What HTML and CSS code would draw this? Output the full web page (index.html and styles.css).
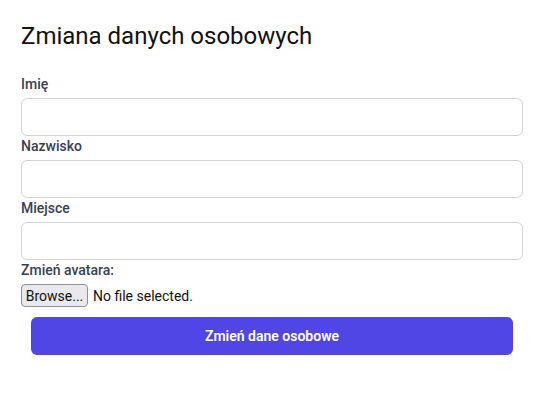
FILE: index.html
```html
<!DOCTYPE html>
<html lang="pl">
<head>
<meta charset="utf-8">
<title>Zmiana danych osobowych</title>
<link rel="stylesheet" href="styles.css">
</head>
<body>
<main class="page">
  <h2 class="title">Zmiana danych osobowych</h2>
  <form class="form">
    <label class="label" for="imie">Imię</label>
    <input class="input" id="imie" type="text">
    <label class="label" for="nazwisko">Nazwisko</label>
    <input class="input" id="nazwisko" type="text">
    <label class="label" for="miejsce">Miejsce</label>
    <input class="input" id="miejsce" type="text">
    <label class="label" for="avatar">Zmień avatara:</label>
    <div class="file">
      <label class="file-btn" for="avatar">Browse...</label>
      <span class="file-name">No file selected.</span>
      <input class="file-input" id="avatar" type="file">
    </div>
    <button class="submit" type="button">Zmień dane osobowe</button>
  </form>
</main>
</body>
</html>
```
FILE: styles.css
```css
html, body {
  margin: 0;
  padding: 0;
  background: #ffffff;
}
body {
  font-family: Roboto, "Liberation Sans", sans-serif;
  color: #000;
}
.page {
  padding: 20px 33px 0 21px;
}
.title {
  margin: 0;
  font-size: 24px;
  line-height: 32px;
  font-weight: 400;
  color: #111;
}
.form {
  display: flex;
  flex-direction: column;
  margin-top: 22px;
}
.label {
  font-size: 14px;
  line-height: 20px;
  font-weight: 500;
  color: #374151;
  margin-bottom: 4px;
}
.input {
  box-sizing: border-box;
  height: 38px;
  width: 100%;
  border: 1px solid #d1d5db;
  border-radius: 6px;
  background: #fff;
  padding: 8px 12px;
  font: inherit;
  margin: 0;
}
.file {
  display: flex;
  align-items: center;
  gap: 5px;
  height: 23px;
}
.file-btn {
  box-sizing: border-box;
  width: 67px;
  height: 23px;
  display: flex;
  align-items: center;
  justify-content: center;
  background: #e9e9ed;
  border: 1px solid #8f8f9d;
  border-radius: 4px;
  font-size: 14px;
  color: #111;
}
.file-name {
  font-size: 14px;
  color: #111;
}
.file-input {
  display: none;
}
.submit {
  box-sizing: border-box;
  margin: 10px 10px 0;
  height: 38px;
  border: none;
  border-radius: 6px;
  background: #4f46e5;
  color: #fff;
  font-family: Roboto, "Liberation Sans", sans-serif;
  font-size: 14px;
  font-weight: 600;
}
```
